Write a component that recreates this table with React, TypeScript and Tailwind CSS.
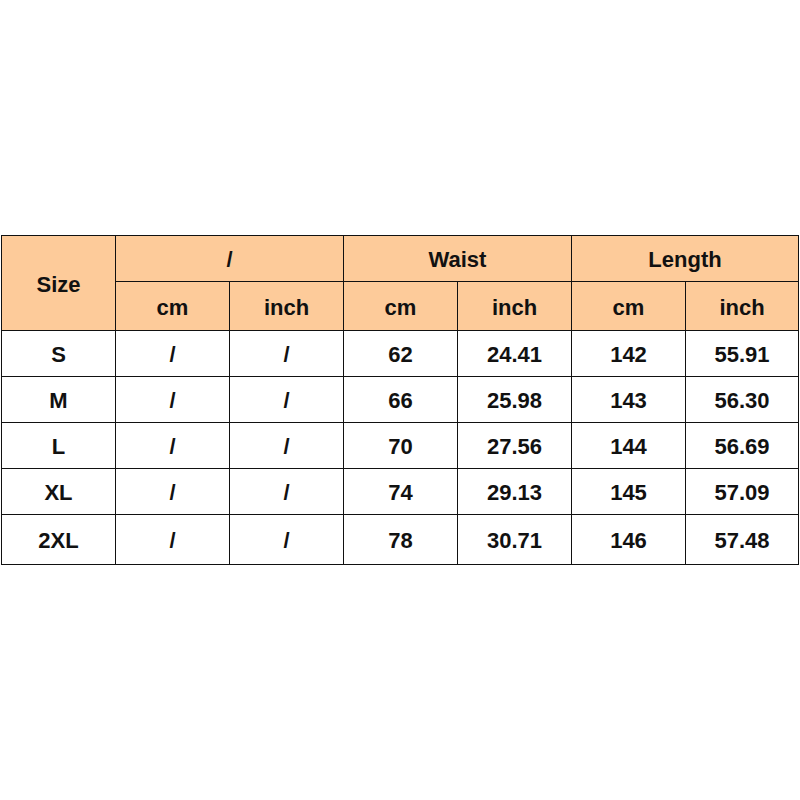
const rows = [
  ["S", "/", "/", "62", "24.41", "142", "55.91"],
  ["M", "/", "/", "66", "25.98", "143", "56.30"],
  ["L", "/", "/", "70", "27.56", "144", "56.69"],
  ["XL", "/", "/", "74", "29.13", "145", "57.09"],
  ["2XL", "/", "/", "78", "30.71", "146", "57.48"],
];

const cell = "flex items-center justify-center pt-[2px] border-r border-b border-[#111]";

export default function App() {
  return (
    <div className="min-h-[800px] w-[800px] bg-white pt-[235px] pl-[1px] font-['Liberation_Sans',Arial,sans-serif] text-[22px] font-bold text-[#111]">
      <div className="grid w-[798px] grid-cols-[114px_114px_114px_114px_114px_114px_113px] grid-rows-[46px_49px_46px_46px_46px_46px_50px] border-l border-t border-[#111]">
        <div className={`${cell} row-span-2 bg-[#fdcb9a]`}>Size</div>
        <div className={`${cell} col-span-2 bg-[#fdcb9a]`}>/</div>
        <div className={`${cell} col-span-2 bg-[#fdcb9a]`}>Waist</div>
        <div className={`${cell} col-span-2 bg-[#fdcb9a]`}>Length</div>
        {["cm", "inch", "cm", "inch", "cm", "inch"].map((h, i) => (
          <div key={i} className={`${cell} bg-[#fdcb9a]`}>
            {h}
          </div>
        ))}
        {rows.map((r) =>
          r.map((v, i) => (
            <div key={r[0] + i} className={cell}>
              {v}
            </div>
          ))
        )}
      </div>
    </div>
  );
}
